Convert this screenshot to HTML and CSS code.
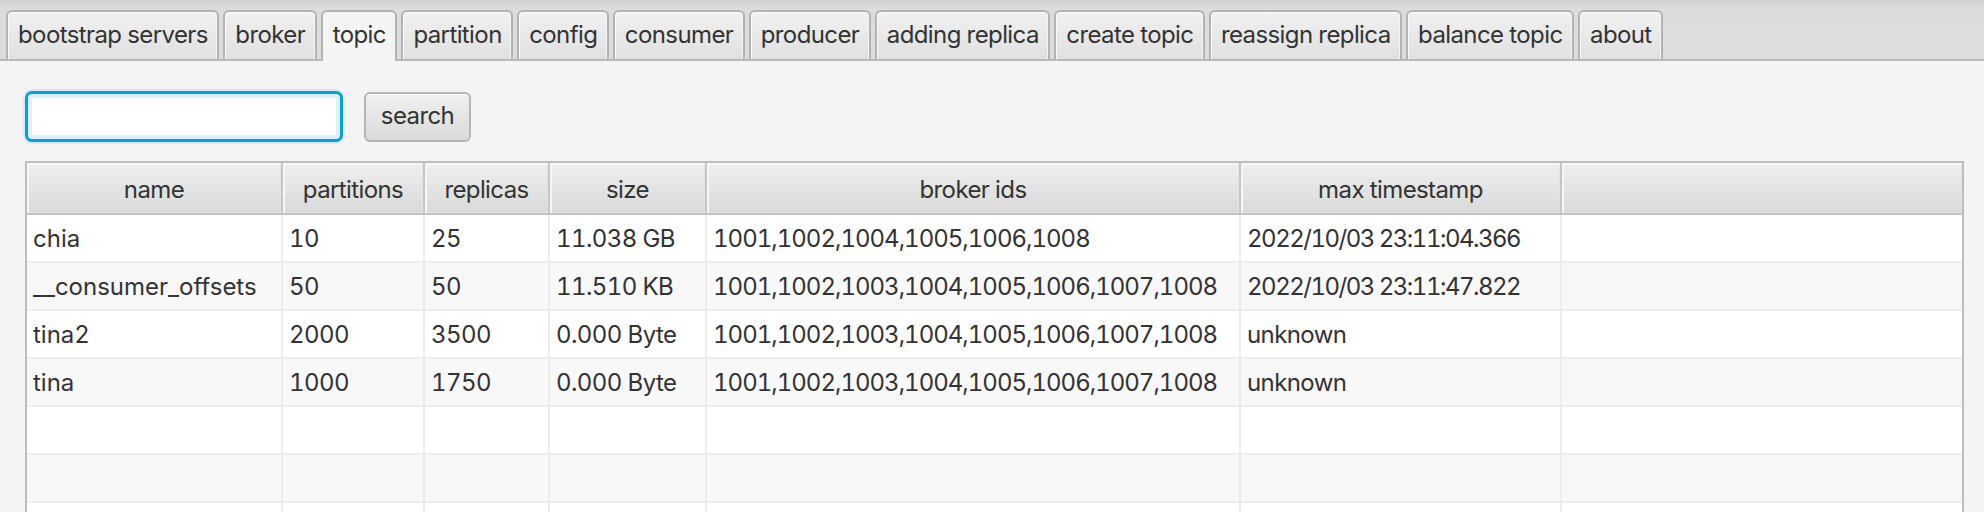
FILE: index.html
```html
<!DOCTYPE html>
<html>
<head>
<meta charset="utf-8">
<link rel="stylesheet" href="styles.css">
</head>
<body>
<div class="tabbar">
  <div class="tab">bootstrap servers</div>
  <div class="tab">broker</div>
  <div class="tab active">topic</div>
  <div class="tab">partition</div>
  <div class="tab">config</div>
  <div class="tab">consumer</div>
  <div class="tab">producer</div>
  <div class="tab">adding replica</div>
  <div class="tab">create topic</div>
  <div class="tab">reassign replica</div>
  <div class="tab">balance topic</div>
  <div class="tab">about</div>
</div>
<div class="content">
  <div class="searchrow">
    <div class="field"></div>
    <button class="btn">search</button>
  </div>
  <div class="table">
    <div class="hcell">name</div>
    <div class="hcell">partitions</div>
    <div class="hcell">replicas</div>
    <div class="hcell">size</div>
    <div class="hcell">broker ids</div>
    <div class="hcell">max timestamp</div>
    <div class="hcell last"></div>

    <div class="cell name">chia</div>
    <div class="cell">10</div>
    <div class="cell">25</div>
    <div class="cell">11.038 GB</div>
    <div class="cell ids">1001,1002,1004,1005,1006,1008</div>
    <div class="cell ts">2022/10/03 23:11:04.366</div>
    <div class="cell last"></div>

    <div class="cell alt name">__consumer_offsets</div>
    <div class="cell alt">50</div>
    <div class="cell alt">50</div>
    <div class="cell alt">11.510 KB</div>
    <div class="cell alt ids">1001,1002,1003,1004,1005,1006,1007,1008</div>
    <div class="cell alt ts">2022/10/03 23:11:47.822</div>
    <div class="cell alt last"></div>

    <div class="cell name">tina2</div>
    <div class="cell">2000</div>
    <div class="cell">3500</div>
    <div class="cell">0.000 Byte</div>
    <div class="cell ids">1001,1002,1003,1004,1005,1006,1007,1008</div>
    <div class="cell">unknown</div>
    <div class="cell last"></div>

    <div class="cell alt name">tina</div>
    <div class="cell alt">1000</div>
    <div class="cell alt">1750</div>
    <div class="cell alt">0.000 Byte</div>
    <div class="cell alt ids">1001,1002,1003,1004,1005,1006,1007,1008</div>
    <div class="cell alt">unknown</div>
    <div class="cell alt last"></div>

    <div class="cell"></div><div class="cell"></div><div class="cell"></div><div class="cell"></div><div class="cell"></div><div class="cell"></div><div class="cell last"></div>
    <div class="cell alt"></div><div class="cell alt"></div><div class="cell alt"></div><div class="cell alt"></div><div class="cell alt"></div><div class="cell alt"></div><div class="cell alt last"></div>
    <div class="cell"></div><div class="cell"></div><div class="cell"></div><div class="cell"></div><div class="cell"></div><div class="cell"></div><div class="cell last"></div>
  </div>
</div>
</body>
</html>
```

FILE: styles.css
```css
* { box-sizing: border-box; }

html, body {
  margin: 0;
  padding: 0;
}

body {
  width: 1984px;
  height: 512px;
  overflow: hidden;
  background: #f4f4f4;
  font-family: Inter, Roboto, "Liberation Sans", sans-serif;
  font-size: 24px;
  letter-spacing: -0.6px;
  font-variant-numeric: tabular-nums;
  color: #333333;
}

.tabbar {
  display: flex;
  align-items: flex-end;
  gap: 4px;
  height: 61px;
  padding: 10px 0 0 6px;
  border-bottom: 2px solid #b9b9b9;
  background: linear-gradient(#cfcfcf, #dcdcdc 8px, #dddddd);
}

.tab {
  display: flex;
  align-items: center;
  height: 49px;
  padding: 0 9.5px 2px 10px;
  border: 2px solid #b3b3b3;
  border-bottom: none;
  border-radius: 6px 6px 0 0;
  background: linear-gradient(#f1f1f1, #e0e0e0);
  box-shadow: inset 1px 1px 0 #fafafa, inset -1px 0 0 #f4f4f4;
  white-space: nowrap;
}

.tab.active {
  height: 51px;
  margin-bottom: -2px;
  padding-bottom: 4px;
  background: #f4f4f4;
  box-shadow: none;
}

.content {
  padding: 30px 20px 0 25px;
}

.searchrow {
  display: flex;
  align-items: center;
  gap: 21px;
  height: 51px;
}

.field {
  width: 318px;
  height: 51px;
  border: 3px solid #0b9dd6;
  border-radius: 7px;
  background: #ffffff;
  box-shadow: inset 0 0 0 4px #dcf0f9, 0 0 0 2px rgba(11, 157, 214, 0.12);
}

.btn {
  width: 107px;
  height: 50px;
  padding: 0 0 2px 0;
  border: 2px solid #b5b5b5;
  border-radius: 6px;
  background: linear-gradient(#f1f1f1, #dadada);
  box-shadow: inset 0 1px 0 #fbfbfb;
  font: inherit;
  letter-spacing: inherit;
  color: #333333;
}

.table {
  margin-top: 19px;
  display: grid;
  grid-template-columns: 256px 142px 125px 157px 534px 321px 1fr;
  grid-template-rows: 52px;
  grid-auto-rows: 48px;
  border: 2px solid #bdbdbd;
  border-bottom: none;
  background: #ffffff;
}

.hcell {
  display: flex;
  align-items: center;
  justify-content: center;
  padding-top: 3px;
  border-right: 2px solid #c6c6c6;
  border-bottom: 2px solid #c2c2c2;
  background: linear-gradient(#efefef, #d9d9d9);
  box-shadow: inset 2px 2px 0 #f6f6f6, inset -1px -1px 0 #e2e2e2;
  white-space: nowrap;
}

.cell {
  display: flex;
  align-items: center;
  padding: 0 5px 0 6px;
  border-right: 2px solid #ececec;
  border-bottom: 2px solid #ececec;
  background: #ffffff;
  white-space: nowrap;
}

.cell.alt {
  background: #f8f8f8;
}

.cell.name {
  letter-spacing: 0;
}

.cell.ids {
  letter-spacing: -1px;
}

.cell.ts {
  letter-spacing: -1.5px;
}

.last {
  border-right: none;
}
```
